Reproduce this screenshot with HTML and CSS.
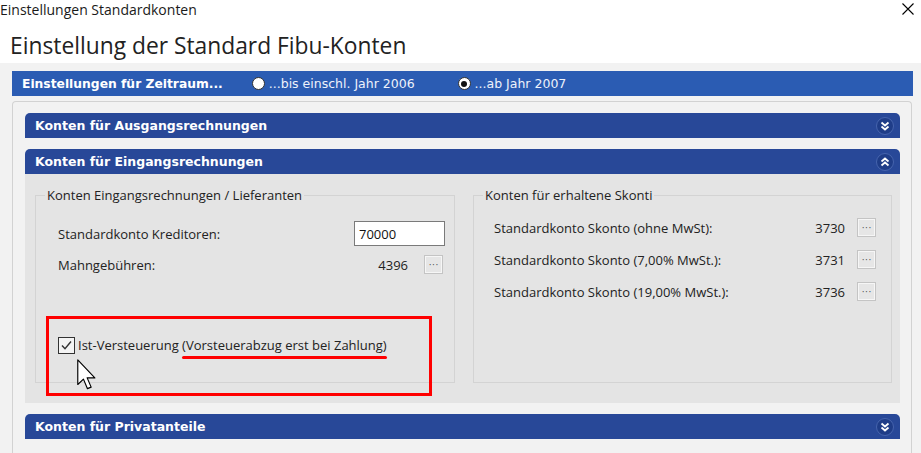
FILE: index.html
```html
<!DOCTYPE html>
<html lang="de">
<head>
  <meta charset="UTF-8" />
  <title>Einstellungen Standardkonten</title>
  <link rel="stylesheet" href="styles.css">
</head>
<body>

  <div class="titlebar">
    <span class="window-title">Einstellungen Standardkonten</span>
    <svg class="close" width="12" height="12" viewBox="0 0 12 12">
      <path d="M0.5 0.5 L11.5 11.5 M11.5 0.5 L0.5 11.5" stroke="#000" stroke-width="1.1" fill="none"/>
    </svg>
  </div>

  <h1 class="heading">Einstellung der Standard Fibu-Konten</h1>

  <div class="page">
    <div class="period-bar">
      <span class="period-title">Einstellungen für Zeitraum...</span>
      <label class="radio"><span class="radio-dot"></span>...bis einschl. Jahr 2006</label>
      <label class="radio"><span class="radio-dot checked"></span>...ab Jahr 2007</label>
    </div>

    <div class="panel">
      <!-- collapsed -->
      <section class="section">
        <div class="section-head">
          <span>Konten für Ausgangsrechnungen</span>
          <svg class="toggle" width="18" height="18" viewBox="0 0 18 18">
            <circle cx="9" cy="9" r="8.5" fill="#1f3d88" stroke="#4664ad"/>
            <path d="M5.5 5.5 L9 8.5 L12.5 5.5 M5.5 9.5 L9 12.5 L12.5 9.5" stroke="#fff" stroke-width="1.8" fill="none"/>
          </svg>
        </div>
      </section>

      <!-- expanded -->
      <section class="section">
        <div class="section-head">
          <span>Konten für Eingangsrechnungen</span>
          <svg class="toggle" width="18" height="18" viewBox="0 0 18 18">
            <circle cx="9" cy="9" r="8.5" fill="#1f3d88" stroke="#4664ad"/>
            <path d="M5.5 8.5 L9 5.5 L12.5 8.5 M5.5 12.5 L9 9.5 L12.5 12.5" stroke="#fff" stroke-width="1.8" fill="none"/>
          </svg>
        </div>
        <div class="section-body">
          <fieldset class="group group-left">
            <legend>Konten Eingangsrechnungen / Lieferanten</legend>
            <div class="row">
              <span class="row-label">Standardkonto Kreditoren:</span>
              <input class="account-input" type="text" value="70000">
            </div>
            <div class="row">
              <span class="row-label">Mahngebühren:</span>
              <span class="value">4396</span>
              <button class="pick">&middot;&middot;&middot;</button>
            </div>
            <label class="check">
              <span class="check-box">
                <svg width="13" height="13" viewBox="0 0 13 13">
                  <path d="M2 6.5 L5 9.8 L11 2.5" stroke="#333" stroke-width="1.4" fill="none"/>
                </svg>
              </span>
              <span>Ist-Versteuerung <span class="hint">(Vorsteuerabzug erst bei Zahlung)</span></span>
            </label>
          </fieldset>

          <fieldset class="group group-right">
            <legend>Konten für erhaltene Skonti</legend>
            <div class="row">
              <span class="row-label">Standardkonto Skonto (ohne MwSt):</span>
              <span class="value">3730</span>
              <button class="pick">&middot;&middot;&middot;</button>
            </div>
            <div class="row">
              <span class="row-label">Standardkonto Skonto (7,00% MwSt.):</span>
              <span class="value">3731</span>
              <button class="pick">&middot;&middot;&middot;</button>
            </div>
            <div class="row">
              <span class="row-label">Standardkonto Skonto (19,00% MwSt.):</span>
              <span class="value">3736</span>
              <button class="pick">&middot;&middot;&middot;</button>
            </div>
          </fieldset>

          <div class="mark-box"></div>
          <svg class="cursor" width="20" height="31" viewBox="0 0 13 20">
            <path d="M0.5 0.5 L0.5 16.5 L4.2 13 L6.8 19.2 L9.2 18.2 L6.6 12.2 L11.6 12.2 Z" fill="#fff" stroke="#000" stroke-width="0.75" stroke-linejoin="round"/>
          </svg>
        </div>
      </section>

      <section class="section">
        <div class="section-head">
          <span>Konten für Privatanteile</span>
          <svg class="toggle" width="18" height="18" viewBox="0 0 18 18">
            <circle cx="9" cy="9" r="8.5" fill="#1f3d88" stroke="#4664ad"/>
            <path d="M5.5 5.5 L9 8.5 L12.5 5.5 M5.5 9.5 L9 12.5 L12.5 9.5" stroke="#fff" stroke-width="1.8" fill="none"/>
          </svg>
        </div>
      </section>
    </div>
  </div>

</body>
</html>
```

FILE: styles.css
```css
html, body {
  height: 100%;
}

body {
  margin: 0;
  display: flex;
  flex-direction: column;
  font-family: "Open Sans", "Noto Sans", sans-serif;
  color: #1a1a1a;
  background: #fff;
  overflow: hidden;
}

/* window chrome */
.titlebar {
  height: 20px;
  display: flex;
  align-items: center;
  justify-content: space-between;
  padding-right: 7px;
}

.window-title {
  font-size: 14px;
  line-height: 20px;
}

.close {
  margin-top: -2px;
}

.heading {
  margin: 0;
  padding: 11px 0 2px 10px;
  font-size: 22.8px;
  line-height: 30px;
  font-weight: 400;
  color: #222;
}

/* main area */
.page {
  flex: 1;
  display: flex;
  flex-direction: column;
  background: #f2f2f2;
  padding: 8px 8px 0 12px;
}

.period-bar {
  height: 25px;
  display: flex;
  align-items: center;
  padding-left: 10px;
  background: #2b5cb3;
  font-family: "DejaVu Sans", Verdana, sans-serif;
  color: #fff;
}

.period-title {
  font-weight: bold;
  font-size: 12.3px;
  margin-right: 29px;
}

.radio {
  display: flex;
  align-items: center;
  font-size: 12.5px;
  color: #eef2fb;
}

.radio + .radio {
  margin-left: 43px;
}

.radio-dot {
  width: 11px;
  height: 11px;
  border: 1px solid #333;
  border-radius: 50%;
  background: #fff;
  margin-right: 4px;
  position: relative;
}

.radio-dot.checked::after {
  content: "";
  position: absolute;
  left: 2.5px;
  top: 2.5px;
  width: 6px;
  height: 6px;
  border-radius: 50%;
  background: #111;
}

.panel {
  flex: 1;
  margin: 5px 1px 0 0;
  padding: 11px 11px 0 12px;
  border: 1px solid #d2d2d2;
  border-bottom: none;
  border-radius: 4px 4px 0 0;
}

.section {
  margin-bottom: 11px;
}

.section-head {
  height: 25px;
  display: flex;
  align-items: center;
  justify-content: space-between;
  padding: 0 6px 0 10px;
  background: #284898;
  border-radius: 5px 5px 0 0;
  font-family: "DejaVu Sans", Verdana, sans-serif;
  font-weight: bold;
  font-size: 12.5px;
  color: #fff;
}

.toggle {
  display: block;
}

.section-body {
  position: relative;
  height: 229px;
  box-sizing: border-box;
  display: flex;
  justify-content: space-between;
  padding: 13px 8px 20px 10px;
  background: #e4e4e4;
  font-size: 13px;
  color: #222;
}

/* group boxes */
.group {
  box-sizing: border-box;
  margin: 0;
  min-width: 0;
  display: flex;
  flex-direction: column;
  border: 1px solid #d3d3d3;
}

.group legend {
  padding: 0 2px;
  line-height: 16px;
}

.group-left {
  width: 420px;
  padding: 18px 9px 0 22px;
}

.group-left legend {
  margin-left: -13px;
}

.group-right {
  width: 419px;
  padding: 12px 15px 0 20px;
  gap: 7px;
}

.group-right legend {
  margin-left: -11px;
}

.group-left .row + .row {
  margin-top: 6px;
}

.row {
  height: 25px;
  display: flex;
  align-items: center;
}

.row-label {
  flex: 1;
}

.account-input {
  width: 91px;
  height: 25px;
  box-sizing: border-box;
  margin: 0;
  padding: 0 4px;
  border: 1px solid #7a7a7a;
  background: #fff;
  font-family: inherit;
  font-size: 13px;
  color: #111;
}

.value {
  margin-right: 12px;
}

.group-left .value {
  margin-right: 16px;
}

.group-left .pick {
  margin-right: 2px;
}

.pick {
  width: 19px;
  height: 19px;
  padding: 0;
  border: 1px solid #c4c4c4;
  box-shadow: inset 0 0 0 1px #f6f6f6;
  background: #e6e6e6;
  font-size: 10px;
  line-height: 15px;
  color: #555;
}

.check {
  display: flex;
  align-items: center;
  margin-top: 59px;
  height: 18px;
}

.check-box {
  width: 15px;
  height: 15px;
  border: 1px solid #333;
  background: #f4f4f4;
  margin-right: 3px;
  display: flex;
  align-items: center;
  justify-content: center;
}

.hint {
  position: relative;
}

.hint::after {
  content: "";
  position: absolute;
  left: 0;
  right: 0;
  bottom: -5px;
  height: 3px;
  border-radius: 2px;
  background: #f00;
}

/* annotation drawn over the form */
.mark-box {
  position: absolute;
  left: 21px;
  top: 142px;
  width: 380px;
  height: 74px;
  border: 3px solid #f00;
}

.cursor {
  position: absolute;
  left: 52px;
  top: 185px;
}
```
